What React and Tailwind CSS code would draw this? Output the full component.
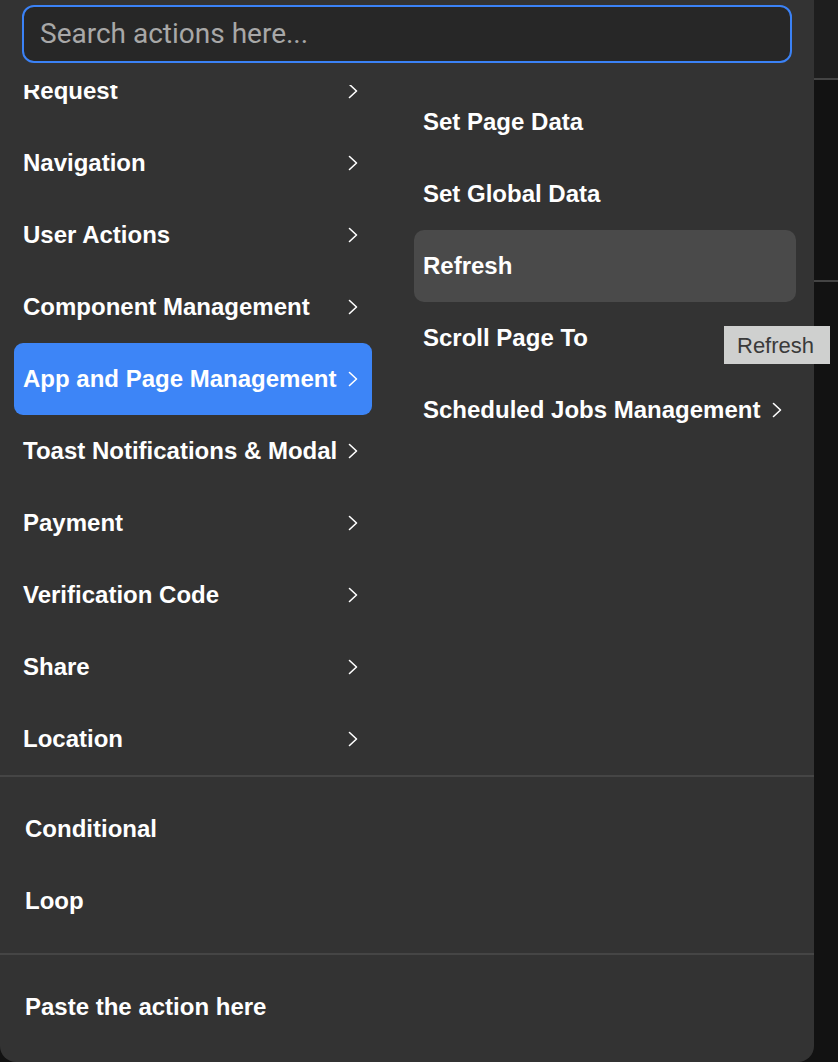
import React from 'react';

const leftItems = [
  'Request',
  'Navigation',
  'User Actions',
  'Component Management',
  'App and Page Management',
  'Toast Notifications & Modal',
  'Payment',
  'Verification Code',
  'Share',
  'Location',
];

const rightItems = [
  { label: 'Set Page Data' },
  { label: 'Set Global Data' },
  { label: 'Refresh', hover: true },
  { label: 'Scroll Page To' },
  { label: 'Scheduled Jobs Management', sub: true },
];

const Chevron = ({ className }) => (
  <svg width="14" height="18" viewBox="0 0 14 18" fill="none" className={className}>
    <path d="M3.5 2.5 L10.5 9 L3.5 15.5" stroke="white" strokeWidth="1.6" strokeLinecap="round" strokeLinejoin="round" />
  </svg>
);

const App = () => {
  const active = 'App and Page Management';

  return (
    <div
      className="relative flex h-[1062px] w-[838px] overflow-hidden bg-[#121212] text-white"
      style={{ fontFamily: '"Liberation Sans", Arial, sans-serif' }}
    >
      {/* action picker panel */}
      <div className="flex h-full w-[814px] shrink-0 flex-col rounded-b-[16px] bg-[#333333]">
        <div className="px-[22px] pt-[5px]">
          <div className="flex h-[58px] items-center rounded-[12px] border-2 border-[#3b82f6] bg-[#272727] px-[16px]">
            <span
              className="text-[28px] text-[#a8a8a8]"
              style={{ fontFamily: 'Roboto, "Liberation Sans", sans-serif' }}
            >
              Search actions here...
            </span>
          </div>
        </div>

        {/* list scrolled a little, so the first row sits under the search box */}
        <div className="mt-[22px] flex h-[690px] gap-[42px] overflow-hidden pl-[14px] pr-[18px]">
          <div className="-mt-[30px] flex w-[358px] shrink-0 flex-col">
            {leftItems.map((item) => (
              <div
                key={item}
                className={`flex h-[72px] shrink-0 items-center justify-between rounded-[9px] pl-[9px] pr-[12px] text-[24px] font-bold ${
                  item === active ? 'bg-[#3d85f7]' : ''
                }`}
              >
                <span>{item}</span>
                <Chevron />
              </div>
            ))}
          </div>

          <div className="flex flex-1 flex-col pt-[1px]">
            {rightItems.map((item) => (
              <div
                key={item.label}
                className={`flex h-[72px] shrink-0 items-center gap-[10px] rounded-[10px] pl-[9px] text-[24px] font-bold ${
                  item.hover ? 'bg-[#4a4a4a]' : ''
                }`}
              >
                <span>{item.label}</span>
                {item.sub && <Chevron />}
              </div>
            ))}
          </div>
        </div>

        <div className="border-t-2 border-[#454545] px-[25px] py-[16px]">
          <div className="flex h-[72px] items-center text-[24px] font-bold">Conditional</div>
          <div className="flex h-[72px] items-center text-[24px] font-bold">Loop</div>
        </div>

        <div className="border-t-2 border-[#454545] px-[25px] pt-[16px]">
          <div className="flex h-[72px] items-center text-[24px] font-bold">Paste the action here</div>
        </div>
      </div>

      {/* editor background strip */}
      <div className="flex flex-1 flex-col">
        <div className="h-[80px] border-b-2 border-[#444444] bg-[#1e1e1e]" />
        <div className="h-[202px] border-b-2 border-[#444444] bg-[#121212]" />
        <div className="flex-1 bg-[#121212]" />
      </div>

      {/* tooltip */}
      <div className="absolute left-[724px] top-[326px] flex h-[38px] w-[106px] items-center bg-[#cfd0cf] pl-[13px] text-[22px] text-[#3a3a3a]">
        Refresh
      </div>
    </div>
  );
};

export default App;
